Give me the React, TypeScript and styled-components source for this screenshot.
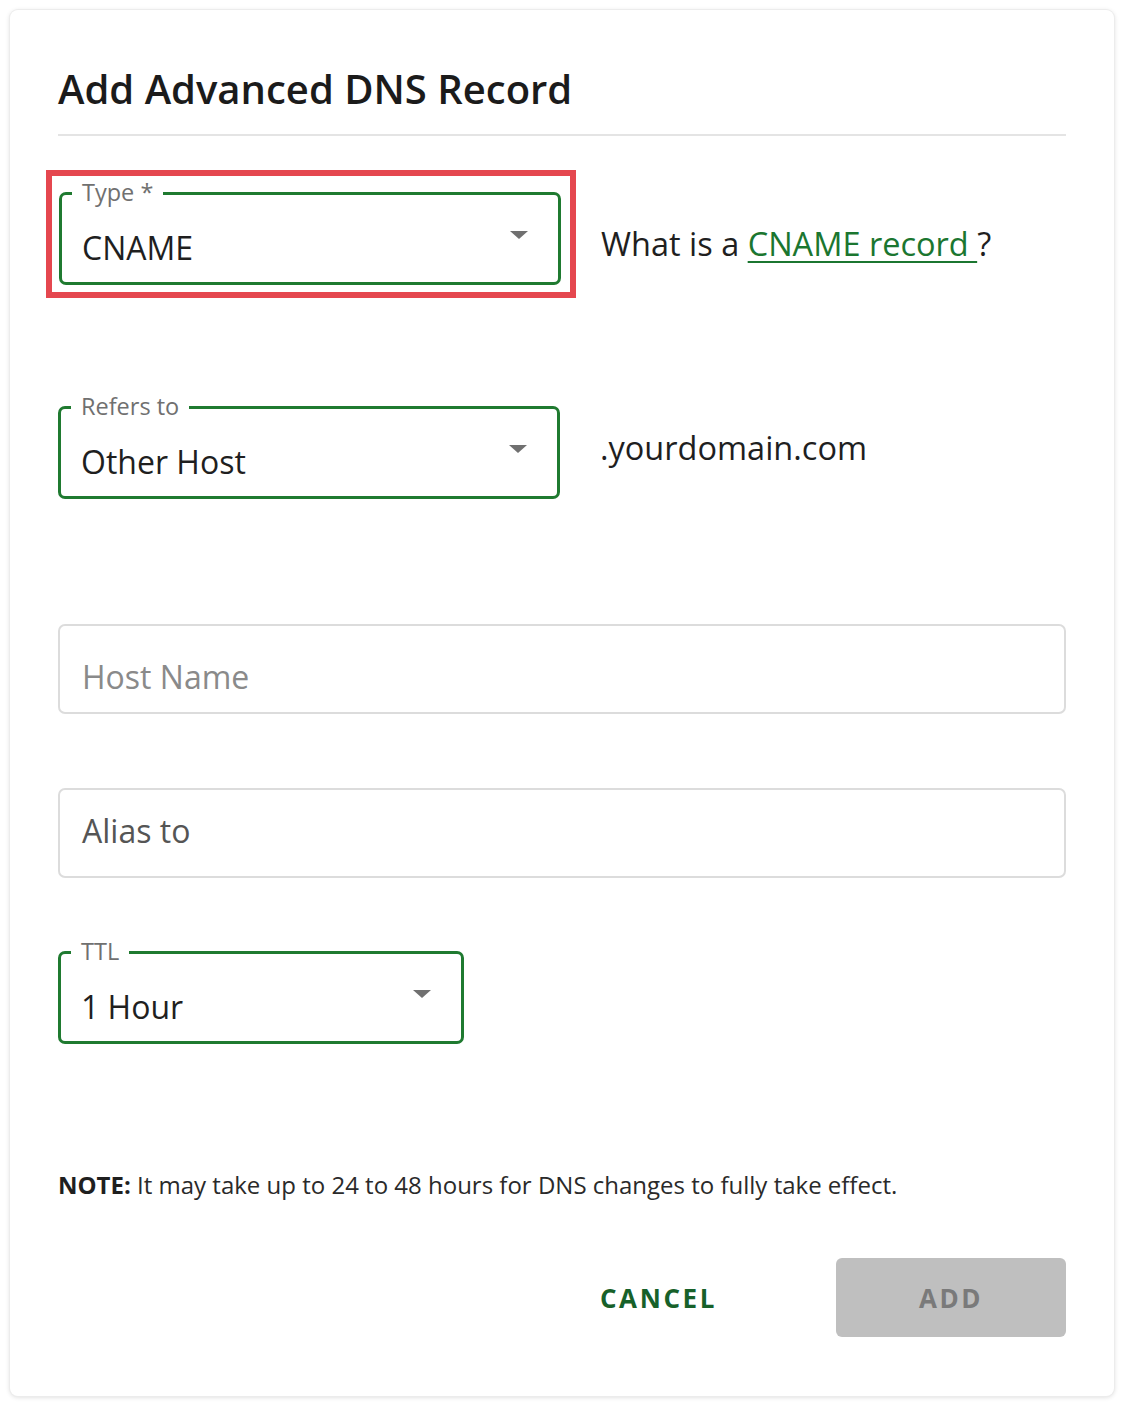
import React from "react";
import styled, { createGlobalStyle } from "styled-components";

const Global = createGlobalStyle`
  html, body { margin: 0; padding: 0; background: #ffffff; }
  body { font-family: "Open Sans", "Noto Sans", Arial, sans-serif; color: #1f1f1f; }
  * { box-sizing: border-box; }
`;

const Page = styled.div`
  width: 1124px;
  height: 1406px;
  padding: 10px 10px 10px 10px;
`;

const Card = styled.div`
  width: 1104px;
  height: 1386px;
  background: #fff;
  border-radius: 8px;
  box-shadow: 0 0 0 1px #ececec, 0 1px 5px rgba(0, 0, 0, 0.16);
  padding: 56px 48px 0 48px;
  display: flex;
  flex-direction: column;
`;

const Title = styled.h2`
  margin: 0;
  font-size: 40px;
  line-height: 45px;
  font-weight: 600;
  color: #1b1b1b;
`;

const Divider = styled.hr`
  margin: 23px 0 0 0;
  border: none;
  height: 2px;
  background: #e4e4e4;
`;

const Row = styled.div<{ $mt: number }>`
  display: flex;
  align-items: flex-start;
  margin-top: ${(p) => p.$mt}px;
`;

const Highlight = styled.div`
  margin-left: -12px;
  border: 6px solid #e5474f;
  padding: 16px 9px 7px 7px;
`;

const SelectBox = styled.div<{ $w: number }>`
  position: relative;
  width: ${(p) => p.$w}px;
  height: 93px;
  border: 3px solid #1f7a30;
  border-radius: 7px;
  padding: 37px 0 0 20px;
  font-size: 32px;
  line-height: 32px;
  color: #1f1f1f;
`;

const FloatLabel = styled.span`
  position: absolute;
  left: 10px;
  top: -16px;
  padding: 0 10px;
  background: #fff;
  font-size: 23.5px;
  line-height: 26px;
  color: #707070;
`;

const Arrow = styled.span<{ $right: number }>`
  position: absolute;
  right: ${(p) => p.$right}px;
  top: 36px;
  width: 0;
  height: 0;
  border-left: 9px solid transparent;
  border-right: 9px solid transparent;
  border-top: 8px solid #707070;
`;

const SideText = styled.div<{ $mt: number; $ml: number }>`
  margin-top: ${(p) => p.$mt}px;
  margin-left: ${(p) => p.$ml}px;
  font-size: 32.5px;
  line-height: 32px;
  color: #1f1f1f;
`;

const Link = styled.a`
  color: #1b7630;
  text-decoration: underline;
  text-decoration-thickness: 2px;
  text-underline-offset: 5px;
`;

const TextBox = styled.div<{ $pt: number; $color: string }>`
  height: 90px;
  width: 100%;
  border: 2px solid #dcdcdc;
  border-radius: 7px;
  padding: ${(p) => p.$pt}px 0 0 22px;
  font-size: 32px;
  line-height: 32px;
  color: ${(p) => p.$color};
`;

const Note = styled.p`
  margin: 126px 0 0 0;
  font-size: 24px;
  line-height: 30px;
  color: #2a2a2a;
  b { font-weight: 700; color: #1f1f1f; }
`;

const Actions = styled.div`
  display: flex;
  justify-content: flex-end;
  align-items: center;
  margin-top: 58px;
`;

const TextButton = styled.button`
  background: none;
  border: none;
  padding: 0;
  margin-right: 119px;
  font-family: inherit;
  font-size: 26px;
  font-weight: 700;
  letter-spacing: 2.6px;
  color: #17612a;
`;

const FilledButton = styled.button`
  width: 230px;
  height: 79px;
  border: none;
  border-radius: 6px;
  background: #bfbfbf;
  font-family: inherit;
  font-size: 26px;
  font-weight: 700;
  letter-spacing: 2.6px;
  color: #7a7a7a;
`;

export default function App() {
  return (
    <>
      <Global />
      <Page>
        <Card>
          <Title>Add Advanced DNS Record</Title>
          <Divider />
          <Row $mt={34}>
            <Highlight>
              <SelectBox $w={502}>
                <FloatLabel>Type *</FloatLabel>
                CNAME
                <Arrow $right={30} />
              </SelectBox>
            </Highlight>
            <SideText $mt={58} $ml={25}>
              What is a <Link href="#">CNAME record </Link>?
            </SideText>
          </Row>
          <Row $mt={108}>
            <SelectBox $w={502}>
              <FloatLabel>Refers to</FloatLabel>
              Other Host
              <Arrow $right={30} />
            </SelectBox>
            <SideText $mt={26} $ml={40}>.yourdomain.com</SideText>
          </Row>
          <Row $mt={125}>
            <TextBox $pt={35} $color="#8a8a8a">Host Name</TextBox>
          </Row>
          <Row $mt={74}>
            <TextBox $pt={25} $color="#555555">Alias to</TextBox>
          </Row>
          <Row $mt={73}>
            <SelectBox $w={406}>
              <FloatLabel>TTL</FloatLabel>
              1 Hour
              <Arrow $right={30} />
            </SelectBox>
          </Row>
          <Note>
            <b>NOTE:</b> It may take up to 24 to 48 hours for DNS changes to fully take effect.
          </Note>
          <Actions>
            <TextButton>CANCEL</TextButton>
            <FilledButton>ADD</FilledButton>
          </Actions>
        </Card>
      </Page>
    </>
  );
}
